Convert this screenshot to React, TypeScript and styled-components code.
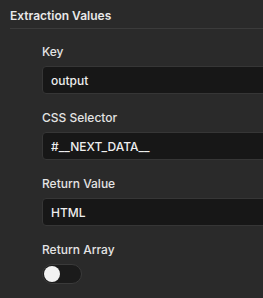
import React, { useState } from "react";
import styled, { createGlobalStyle } from "styled-components";

const GlobalStyle = createGlobalStyle`
  html, body {
    margin: 0;
    padding: 0;
    background: #2a2a2a;
  }
  body {
    font-family: Inter, "Noto Sans", "Liberation Sans", sans-serif;
    -webkit-font-smoothing: antialiased;
  }
`;

const Panel = styled.section`
  width: 263px;
  height: 298px;
  overflow: hidden;
  background: #2a2a2a;
  color: #e6e6e6;
`;

const SectionHeader = styled.div`
  margin-left: 10px;
  padding: 8px 0 4px;
  font-size: 12px;
  line-height: 16px;
  font-weight: 600;
  color: #e8e8e8;
  border-bottom: 1px solid #3b3b3b;
`;

const FieldList = styled.div`
  display: flex;
  flex-direction: column;
  gap: 16px;
  padding: 15px 0 0 42px;
`;

const Field = styled.div`
  display: flex;
  flex-direction: column;
  gap: 6px;
`;

const Label = styled.label`
  font-size: 12px;
  line-height: 16px;
  font-weight: 500;
  color: #e4e4e4;
`;

const TextInput = styled.input`
  box-sizing: border-box;
  width: 260px;
  height: 28px;
  padding: 0 8px;
  border: 1px solid #363636;
  border-radius: 4px;
  background: #171717;
  color: #eeeeee;
  font-family: inherit;
  font-size: 12px;
  font-weight: 500;
  outline: none;
`;

const Toggle = styled.button<{ $on: boolean }>`
  position: relative;
  box-sizing: border-box;
  width: 40px;
  height: 20px;
  padding: 0;
  border: 1px solid #3a3a3a;
  border-radius: 10px;
  background: ${(p) => (p.$on ? "#4a7dff" : "#1b1b1b")};
  cursor: pointer;
`;

const Knob = styled.span<{ $on: boolean }>`
  position: absolute;
  top: 1px;
  left: ${(p) => (p.$on ? "21px" : "1px")};
  width: 16px;
  height: 16px;
  border-radius: 50%;
  background: #f2f2f2;
`;

const fields = [
  { label: "Key", value: "output" },
  { label: "CSS Selector", value: "#__NEXT_DATA__" },
  { label: "Return Value", value: "HTML" },
];

export default function App() {
  const [returnArray, setReturnArray] = useState(false);
  return (
    <>
      <GlobalStyle />
      <Panel>
        <SectionHeader>Extraction Values</SectionHeader>
        <FieldList>
          {fields.map((f) => (
            <Field key={f.label}>
              <Label>{f.label}</Label>
              <TextInput defaultValue={f.value} />
            </Field>
          ))}
          <Field>
            <Label>Return Array</Label>
            <Toggle $on={returnArray} onClick={() => setReturnArray(!returnArray)}>
              <Knob $on={returnArray} />
            </Toggle>
          </Field>
        </FieldList>
      </Panel>
    </>
  );
}
